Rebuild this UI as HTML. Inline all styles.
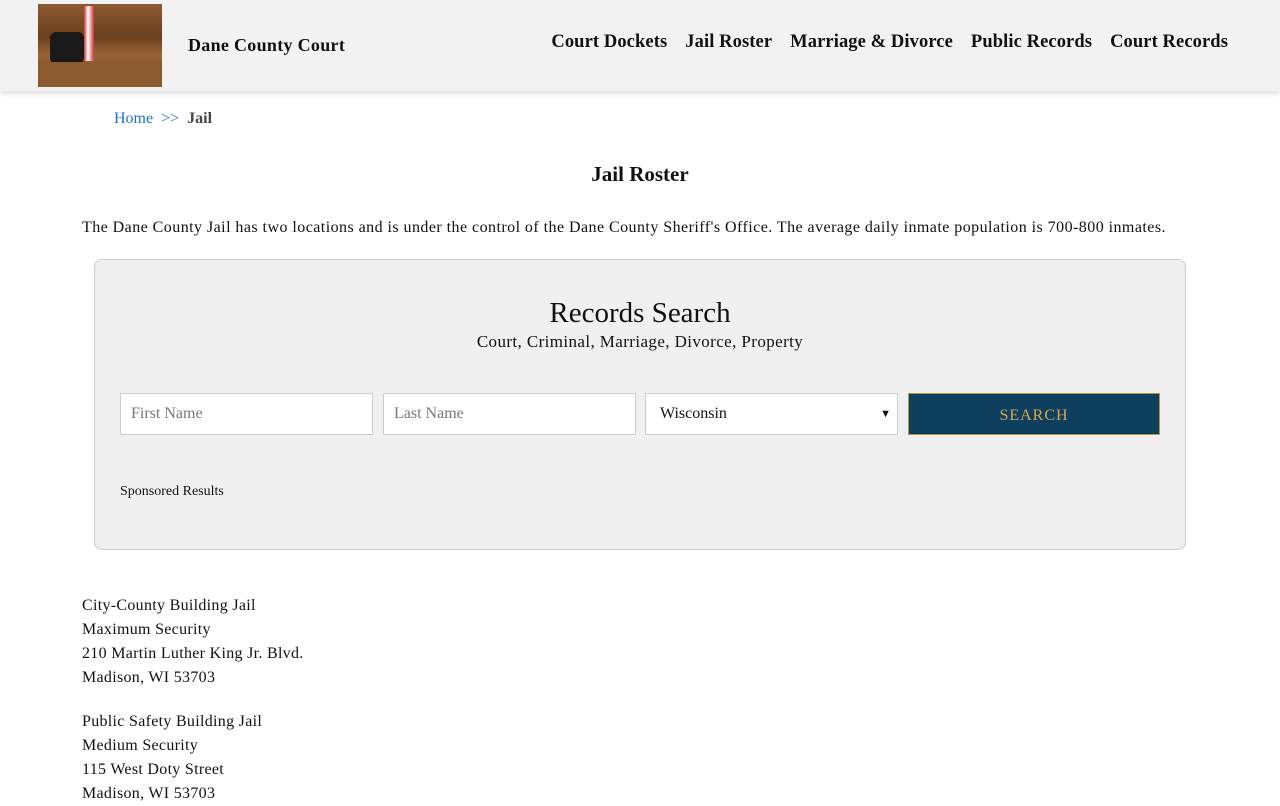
<!DOCTYPE html>
<html><head><meta charset="utf-8"><style>
*{box-sizing:border-box;margin:0;padding:0}
body{width:1280px;height:800px;overflow:hidden;background:#fff;font-family:"Liberation Serif",serif;color:#111}
.hdr{height:91px;background:#f2f2f2;box-shadow:0 2px 6px rgba(0,0,0,.15);position:relative}
.logo{position:absolute;left:38px;top:4px;width:124px;height:83px;background:linear-gradient(180deg,#8a5a32 0%,#6b3f1e 40%,#9a6336 60%,#7a4a25 100%)}
.logo .ch{position:absolute;left:12px;top:28px;width:34px;height:32px;background:#1a1a1a;border-radius:6px}
.logo .fl{position:absolute;left:46px;top:2px;width:10px;height:55px;background:linear-gradient(90deg,#c33 0,#fff 40%,#c33 100%)}
.logo .dk{position:absolute;left:0;top:58px;width:124px;height:25px;background:#8b5a2f}
.title{position:absolute;left:188px;top:35px;font-size:18px;font-weight:bold;letter-spacing:.3px}
.nav{position:absolute;right:52px;top:32px;display:flex;gap:18px;font-size:18.5px;font-weight:bold;letter-spacing:.1px}
.bc{position:absolute;left:114px;top:110px;font-size:16px}
.bc a{color:#1a6fd0;text-decoration:none}
.bc b{color:#444}
h1{position:absolute;top:162px;width:100%;text-align:center;font-size:21px}
.p{position:absolute;left:82px;top:219px;font-size:16px;letter-spacing:.45px}
.box{position:absolute;left:94px;top:259px;width:1092px;height:291px;background:#f0f0f0;border:1px solid #ccc;border-radius:8px}
.box h2{position:absolute;top:37px;width:100%;text-align:center;font-size:29px;font-weight:normal}
.box .s{position:absolute;top:72px;width:100%;text-align:center;font-size:17px;letter-spacing:.4px}
.f{position:absolute;top:133px;width:253px;height:42px;background:#fff;border:1px solid #ccc;font-size:16px;color:#777;padding:11px 10px}
.btn{position:absolute;top:133px;left:813px;width:252px;height:42px;background:#0f3f5f;border:1px solid #b8963c;color:#d9a74a;font-size:16px;letter-spacing:1px;text-align:center;padding-top:13px}
.sp{position:absolute;left:25px;top:224px;font-size:14px}
.addr{position:absolute;left:82px;font-size:16px;line-height:24px;letter-spacing:.3px}
</style></head><body>
<div class="hdr"><div class="logo"><div class="fl"></div><div class="ch"></div><div class="dk"></div></div>
<div class="title">Dane County Court</div>
<div class="nav"><span>Court Dockets</span><span>Jail Roster</span><span>Marriage &amp; Divorce</span><span>Public Records</span><span>Court Records</span></div></div>
<div class="bc"><a>Home</a>&nbsp;&nbsp;<a>&gt;&gt;</a>&nbsp;&nbsp;<b>Jail</b></div>
<h1>Jail Roster</h1>
<div class="p">The Dane County Jail has two locations and is under the control of the Dane County Sheriff's Office. The average daily inmate population is 700-800 inmates.</div>
<div class="box"><h2>Records Search</h2><div class="s">Court, Criminal, Marriage, Divorce, Property</div>
<div class="f" style="left:25px">First Name</div>
<div class="f" style="left:288px">Last Name</div>
<div class="f" style="left:550px;color:#111;padding-left:14px">Wisconsin<span style="position:absolute;right:6px;font-size:11px;top:14px">&#9660;</span></div>
<div class="btn">SEARCH</div>
<div class="sp">Sponsored Results</div></div>
<div class="addr" style="top:594px">City-County Building Jail<br>Maximum Security<br>210 Martin Luther King Jr. Blvd.<br>Madison, WI 53703</div>
<div class="addr" style="top:710px">Public Safety Building Jail<br>Medium Security<br>115 West Doty Street<br>Madison, WI 53703</div>
</body></html>
